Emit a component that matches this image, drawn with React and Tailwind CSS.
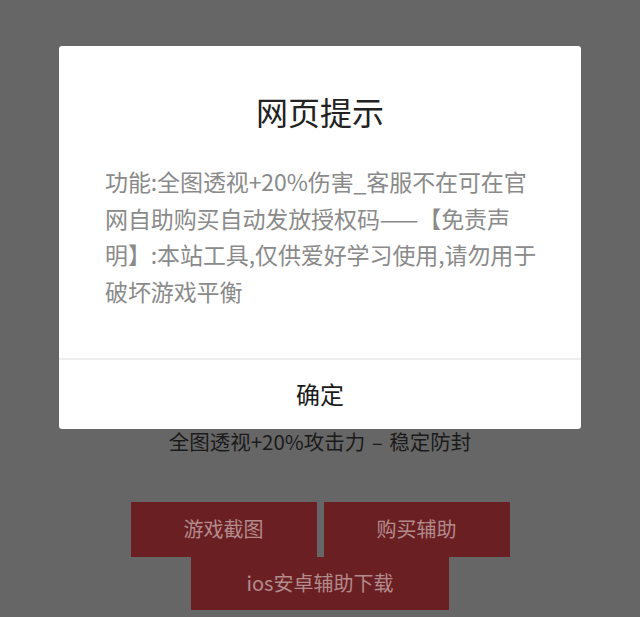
import React from "react";

const font = { fontFamily: '"Noto Sans CJK SC", "Noto Sans", sans-serif' };

const bodyLines = [
  "功能:全图透视+20%伤害_客服不在可在官",
  "网自助购买自动发放授权码——【免责声",
  "明】:本站工具,仅供爱好学习使用,请勿用于",
  "破坏游戏平衡",
];

export default function App() {
  return (
    <div
      className="w-[640px] h-[617px] bg-[#666666] overflow-hidden flex flex-col items-center"
      style={font}
    >
      {/* alert dialog */}
      <div className="mt-[46px] w-[522px] bg-white rounded-[3px] flex flex-col">
        <div className="pt-[43px] text-center text-[32px] leading-[44px] text-[#222]">
          网页提示
        </div>
        <div className="mt-[30px] pl-[46px] pr-[30px] text-[23px] leading-[36.7px] text-[#8a8a8a] tracking-[-0.1px]">
          {bodyLines.map((l) => (
            <div key={l} className="whitespace-nowrap">
              {l}
            </div>
          ))}
        </div>
        <div className="mt-[48px] h-[2px] bg-[#eeeeee]" />
        <div className="h-[69px] flex items-center justify-center text-[24px] text-[#1a1a1a]">
          确定
        </div>
      </div>

      {/* page content behind the overlay */}
      <div className="-mt-[2px] text-[20.5px] leading-[28px] text-[#1a1a1a]">
        全图透视+20%攻击力 <span className="mx-[2px]">–</span> 稳定防封
      </div>

      <div className="mt-[47px] flex flex-col items-center">
        <div className="flex gap-[7px]">
          <div className="w-[186px] h-[55px] bg-[#6a2023] flex items-center justify-center text-[20px] text-[#b48b8c]">
            游戏截图
          </div>
          <div className="w-[186px] h-[55px] bg-[#6a2023] flex items-center justify-center text-[20px] text-[#b48b8c]">
            购买辅助
          </div>
        </div>
        <div className="w-[258px] h-[53px] bg-[#6a2023] flex items-center justify-center text-[20px] text-[#b48b8c]">
          ios安卓辅助下载
        </div>
      </div>
    </div>
  );
}
